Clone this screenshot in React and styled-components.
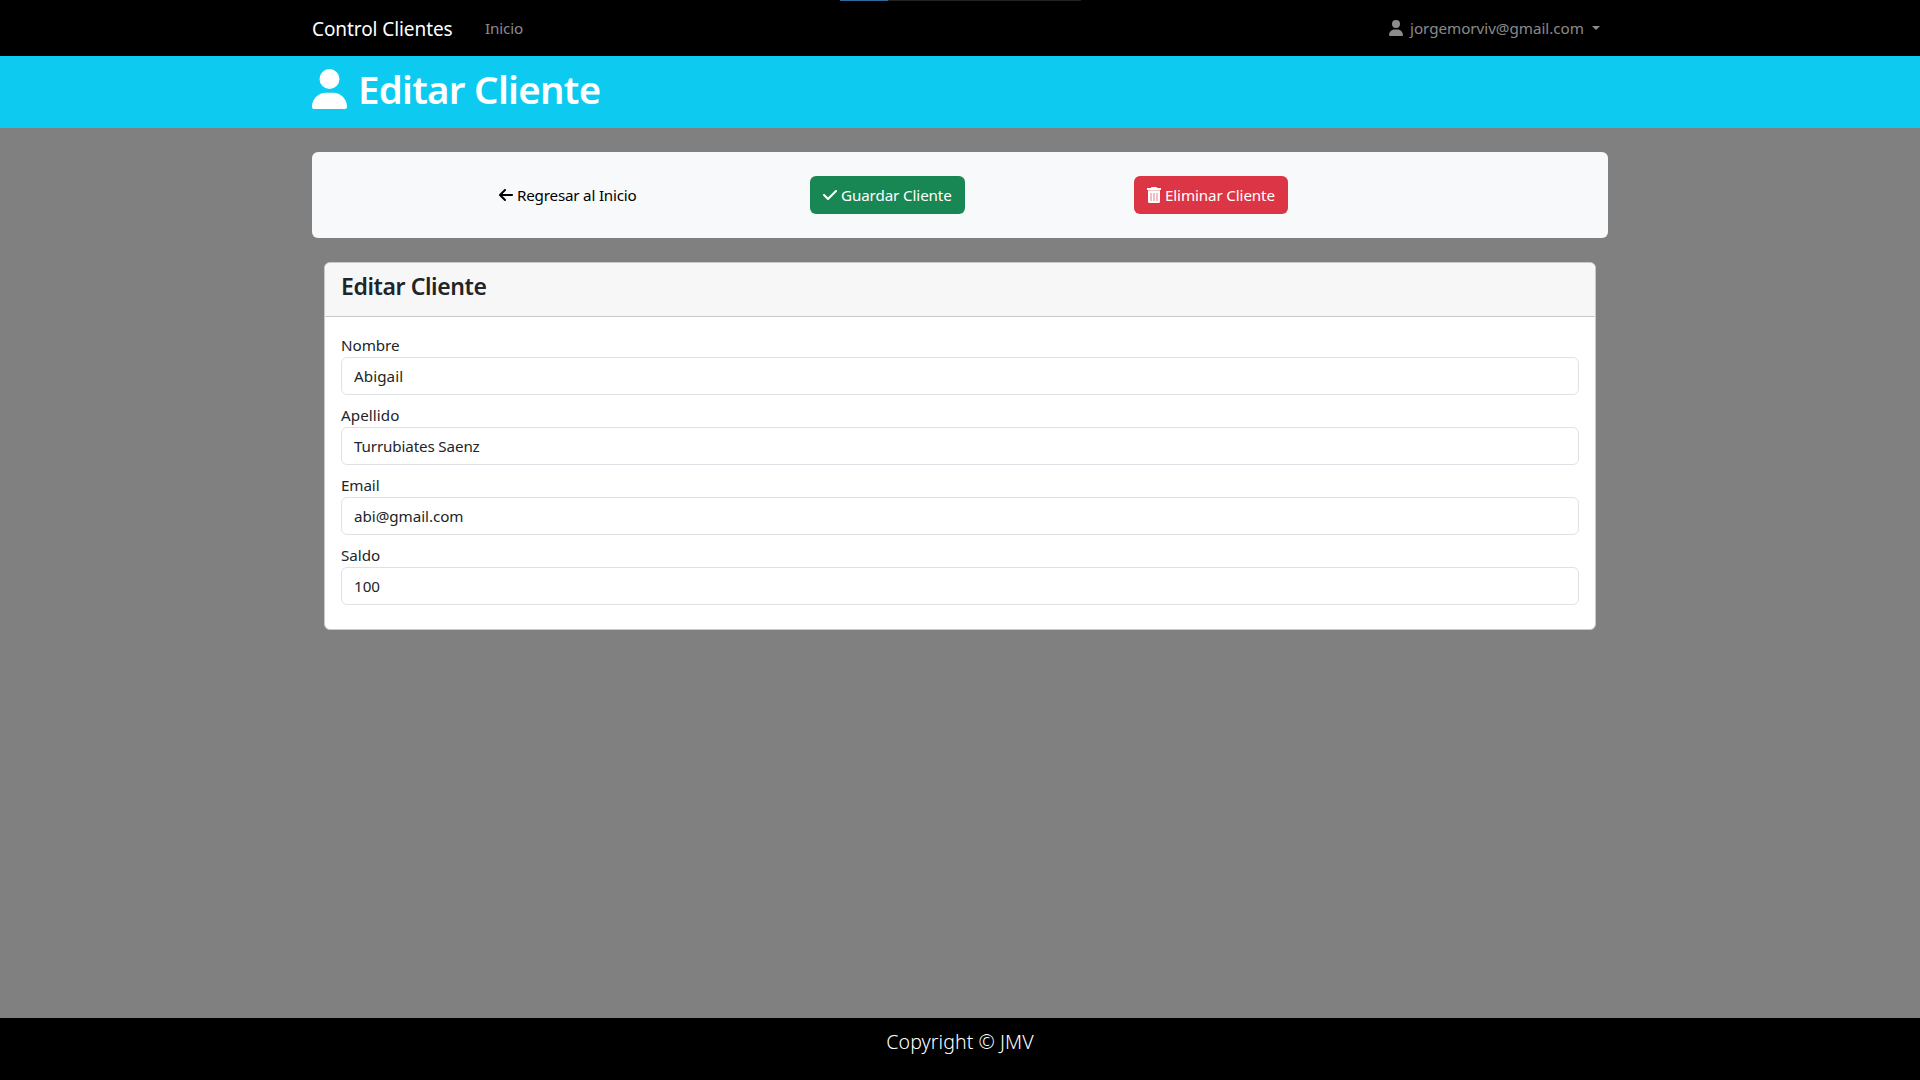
import React from "react";
import styled, { createGlobalStyle } from "styled-components";
import { FaUser, FaArrowLeft, FaCheck } from "react-icons/fa6";

const GlobalStyle = createGlobalStyle`
  *, *::before, *::after { box-sizing: border-box; }
  body {
    margin: 0;
    background: #808080;
    color: #212529;
    font-family: "Segoe UI", "Noto Sans", "Open Sans", sans-serif;
    font-size: 15.2px;
    line-height: 24px;
  }
  h1, h4, p { margin: 0; }
`;

const Page = styled.div`
  min-height: 100vh;
  display: flex;
  flex-direction: column;
`;

const Container = styled.div`
  width: 1320px;
  margin: 0 auto;
  padding: 0 12px;
`;

const Text = styled.span`
  letter-spacing: ${(p) => p.$track || 0}px;
  white-space: nowrap;
`;

const Navbar = styled.nav`
  height: 56px;
  background: #000;
`;

const NavInner = styled(Container)`
  height: 100%;
  display: flex;
  align-items: center;
`;

const Brand = styled.a`
  width: 141px;
  margin-right: 32px;
  padding-top: 2px;
  color: #fff;
  font-size: 19px;
  line-height: 30px;
`;

const NavLink = styled.a`
  color: rgba(255, 255, 255, 0.55);
`;

const UserMenu = styled.a`
  display: flex;
  align-items: center;
  width: 219px;
  margin-left: auto;
  color: rgba(255, 255, 255, 0.55);
`;

const UserName = styled.span`
  width: 174px;
  margin-left: 7px;
`;

const Caret = styled.span`
  margin-left: 8px;
  border-top: 4px solid currentColor;
  border-left: 4px solid transparent;
  border-right: 4px solid transparent;
`;

const Icon = styled.span`
  display: inline-flex;
  flex: none;
  width: ${(p) => p.$size * 0.875}px;
  height: ${(p) => p.$size}px;
  svg { width: 100%; height: 100%; }
`;

const LoadingBar = styled.div`
  position: absolute;
  top: 0;
  left: 840px;
  width: 241px;
  height: 1px;
  background: linear-gradient(to right, #2c6a9b 48px, #222 48px);
`;

const Banner = styled.header`
  height: 72px;
  background: #0dcaf0;
  color: #fff;
`;

const BannerTitle = styled.h1`
  display: flex;
  align-items: center;
  gap: 11px;
  height: 66px;
  font-size: 38.4px;
  font-weight: 600;
  line-height: 48px;
`;

const Actions = styled.section`
  width: 1296px;
  height: 86px;
  margin: 24px auto;
  padding: 24px 162px;
  display: grid;
  grid-template-columns: repeat(3, 1fr);
  background: #f8f9fa;
  border-radius: 6px;
`;

const Column = styled.div`
  padding: 0 12px;
`;

const variants = {
  light: ["#f8f9fa", "#000"],
  success: ["#198754", "#fff"],
  danger: ["#dc3545", "#fff"],
};

const Button = styled.button`
  display: flex;
  align-items: center;
  gap: 4px;
  width: ${(p) => p.$width}px;
  height: 38px;
  padding: 0 13px;
  border: 0;
  border-radius: 6px;
  font: inherit;
  background: ${(p) => variants[p.$variant][0]};
  color: ${(p) => variants[p.$variant][1]};
`;

const Card = styled.section`
  width: 1272px;
  margin: 0 auto;
  border: 1px solid #c9c9c9;
  border-radius: 6px;
  background: #fff;
  overflow: hidden;
`;

const CardHeader = styled.div`
  height: 54px;
  padding: 9px 16px 8px;
  background: #f7f7f7;
  border-bottom: 1px solid #c8c9ca;
`;

const CardTitle = styled.h4`
  font-size: 23px;
  font-weight: 600;
  line-height: 29px;
`;

const CardBody = styled.form`
  padding: 16px;
`;

const Field = styled.div`
  margin-bottom: 8px;
`;

const Label = styled.label`
  display: block;
  height: 24px;
`;

const Input = styled.input`
  display: block;
  width: 100%;
  height: 38px;
  padding: 6px 12px;
  border: 1px solid #dee2e6;
  border-radius: 6px;
  background: #fff;
  color: #212529;
  font: inherit;
  letter-spacing: ${(p) => p.$track || 0}px;
`;

const Footer = styled.footer`
  height: 62px;
  margin-top: auto;
  padding-top: 9px;
  background: #000;
  color: #fff;
  text-align: center;
  font-size: 19.6px;
  font-weight: 300;
  line-height: 30px;
`;

const fields = [
  { label: "Nombre", value: "Abigail", labelTrack: -0.05, track: 0.08 },
  { label: "Apellido", value: "Turrubiates Saenz", labelTrack: 0.08, track: -0.14 },
  { label: "Email", value: "abi@gmail.com", labelTrack: -0.1, track: -0.05 },
  { label: "Saldo", value: "100", labelTrack: 0, track: 0 },
];

function TrashIcon() {
  return (
    <svg viewBox="0 0 14 16" fill="currentColor">
      <path d="M4.6 0h4.8l.8 1H14v2H0V1h3.8z" />
      <path
        fillRule="evenodd"
        d="M1 4h12v10.5a1.5 1.5 0 0 1-1.5 1.5h-9A1.5 1.5 0 0 1 1 14.5zM3.5 6v8h1V6zM6.5 6v8h1V6zM9.5 6v8h1V6z"
      />
      <path opacity=".7" d="M1 3h12v1H1zM3.5 6h1v8h-1zM6.5 6h1v8h-1zM9.5 6h1v8h-1z" />
    </svg>
  );
}

export default function App() {
  return (
    <Page>
      <GlobalStyle />
      <LoadingBar />
      <Navbar>
        <NavInner>
          <Brand><Text $track={-0.08}>Control Clientes</Text></Brand>
          <NavLink><Text $track={-0.15}>Inicio</Text></NavLink>
          <UserMenu>
            <Icon $size={16}><FaUser /></Icon>
            <UserName><Text $track={-0.03}>jorgemorviv@gmail.com</Text></UserName>
            <Caret />
          </UserMenu>
        </NavInner>
      </Navbar>
      <Banner>
        <Container>
          <BannerTitle>
            <Icon $size={40}><FaUser /></Icon>
            <Text $track={-0.7}>Editar Cliente</Text>
          </BannerTitle>
        </Container>
      </Banner>
      <Actions>
        <Column>
          <Button $variant="light" $width={164}>
            <Icon $size={16}><FaArrowLeft /></Icon>
            <Text $track={-0.2}>Regresar al Inicio</Text>
          </Button>
        </Column>
        <Column>
          <Button $variant="success" $width={155}>
            <Icon $size={16}><FaCheck /></Icon>
            <Text $track={-0.12}>Guardar Cliente</Text>
          </Button>
        </Column>
        <Column>
          <Button $variant="danger" $width={154}>
            <Icon $size={16}><TrashIcon /></Icon>
            <Text $track={-0.13}>Eliminar Cliente</Text>
          </Button>
        </Column>
      </Actions>
      <Card>
        <CardHeader>
          <CardTitle><Text $track={-0.4}>Editar Cliente</Text></CardTitle>
        </CardHeader>
        <CardBody>
          {fields.map((f) => (
            <Field key={f.label}>
              <Label htmlFor={f.label}><Text $track={f.labelTrack}>{f.label}</Text></Label>
              <Input id={f.label} defaultValue={f.value} $track={f.track} />
            </Field>
          ))}
        </CardBody>
      </Card>
      <Footer><Text $track={0.05}>Copyright © JMV</Text></Footer>
    </Page>
  );
}
